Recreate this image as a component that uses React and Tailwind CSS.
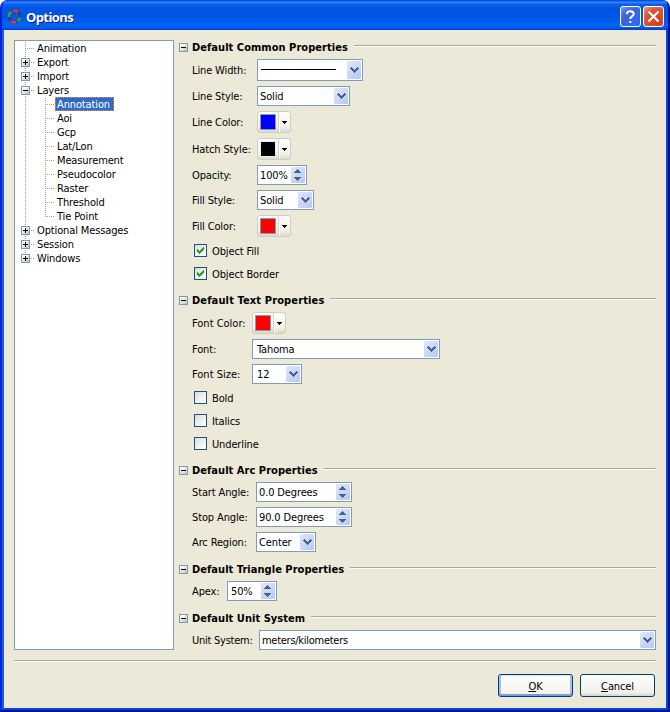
import React from "react";

function Expander({ open }) {
  return (
    <svg width="9" height="9" className="shrink-0" shapeRendering="crispEdges">
      <defs>
        <linearGradient id="box" x1="0" y1="0" x2="1" y2="1">
          <stop offset="0.2" stopColor="#fff" />
          <stop offset="1" stopColor="#c4bdac" />
        </linearGradient>
      </defs>
      <rect width="9" height="9" fill="#7b9ab8" />
      <rect x="1" y="1" width="7" height="7" fill="url(#box)" />
      <rect x="2" y="4" width="5" height="1" fill="#000" />
      {!open && <rect x="4" y="2" width="1" height="5" fill="#000" />}
    </svg>
  );
}

const tree = [
  { t: "Animation", k: "leaf" },
  { t: "Export", k: "plus" },
  { t: "Import", k: "plus" },
  { t: "Layers", k: "minus" },
  { t: "Annotation", k: "child", sel: true },
  { t: "Aoi", k: "child" },
  { t: "Gcp", k: "child" },
  { t: "Lat/Lon", k: "child" },
  { t: "Measurement", k: "child" },
  { t: "Pseudocolor", k: "child" },
  { t: "Raster", k: "child" },
  { t: "Threshold", k: "child" },
  { t: "Tie Point", k: "child", last: true },
  { t: "Optional Messages", k: "plus" },
  { t: "Session", k: "plus" },
  { t: "Windows", k: "plus", last: true },
];

function Branch({ k, last }) {
  const child = k === "child";
  const dots = { stroke: "#a39e8c", strokeDasharray: "1 1" };
  return (
    <svg width={child ? 40 : 20} height="14" className="shrink-0" shapeRendering="crispEdges">
      <line x1="10.5" y1="1" x2="10.5" y2={last && !child ? 8 : 14} {...dots} />
      {child && <line x1="30.5" y1="1" x2="30.5" y2={last ? 8 : 14} {...dots} />}
      <line x1={child ? 32 : 12} y1="7.5" x2={child ? 40 : 20} y2="7.5" {...dots} />
      {(k === "plus" || k === "minus") && (
        <g>
          <rect x="5" y="2" width="11" height="11" fill="#fff" />
          <svg x="6" y="3" width="9" height="9">
            <Expander open={k === "minus"} />
          </svg>
        </g>
      )}
    </svg>
  );
}

function Chevron() {
  return (
    <span className="flex h-full w-[14px] shrink-0 items-center rounded-[1px] bg-[linear-gradient(135deg,#dfe8fe,#b4c8f6)] pl-[3px]">
      <svg width="9" height="6" shapeRendering="crispEdges" fill="#4d6185">
        <path d="M0 1h1V0h1v1h1v1h1v1h1V2h1V1h1V0h1v1h1v1H8v1H7v1H6v1H5v1H4V5H3V4H2V3H1V2H0z" />
      </svg>
    </span>
  );
}

function Spin() {
  return (
    <span className="flex h-full w-[14px] shrink-0 flex-col items-start justify-between rounded-[1px] bg-[linear-gradient(135deg,#dfe8fe,#b4c8f6)] py-[2px] pl-[3px]">
      <svg width="7" height="4" shapeRendering="crispEdges" fill="#4d6185">
        <path d="M3 0h1v1h1v1h1v1h1v1H0V3h1V2h1V1h1z" />
      </svg>
      <svg width="7" height="4" shapeRendering="crispEdges" fill="#4d6185">
        <path d="M3 4h1V3h1V2h1V1h1V0H0v1h1v1h1v1h1z" />
      </svg>
    </span>
  );
}

function Field({ w, h = "h-5", pl = "pl-px", spin, children }) {
  return (
    <div className={`flex shrink-0 items-center border border-[#7f9db9] bg-white p-px ${w} ${h}`}>
      <span className={`flex-1 pt-[2px] ${pl}`}>{children}</span>
      {spin ? <Spin /> : <Chevron />}
    </div>
  );
}

function ColorButton({ color, edge = "border-[#7f9db9]" }) {
  return (
    <div className="flex h-[22px] w-[34px] shrink-0 items-center rounded-[3px] border border-[#d0cec2] bg-[linear-gradient(#fdfdfb,#f3f2ea_70%,#dedacb)] pl-[2px]">
      <span className={`h-4 w-4 shrink-0 border ${edge} ${color}`} />
      <span className="ml-[2px] h-full w-px bg-[#d6d3c6]" />
      <span className="h-full w-px bg-white" />
      <svg width="5" height="3" className="ml-[2px]" shapeRendering="crispEdges">
        <path d="M0 0h5v1H4v1H3v1H2V2H1V1H0z" />
      </svg>
    </div>
  );
}

function Check({ label, on, m }) {
  return (
    <div className={`ml-[15px] flex h-[13px] items-center ${m}`}>
      <span className="flex h-[13px] w-[13px] shrink-0 items-center justify-center border border-[#1c5180] bg-[linear-gradient(135deg,#dcdcd7,#ffffff)]">
        {on && (
          <svg width="7" height="7" shapeRendering="crispEdges" fill="#21a121">
            <path d="M0 2h1v1h1v1h1V3h1V2h1V1h1V0h1v3H6v1H5v1H4v1H3v1H2V6H1V5H0z" />
          </svg>
        )}
      </span>
      <span className="ml-[5px] pt-[2px]">{label}</span>
    </div>
  );
}

function Rule() {
  return <span className="h-[2px] flex-1 border-b border-white bg-[#aca899]" />;
}

function Header({ title, m, tr = "tracking-[0.04px]" }) {
  return (
    <div className={`flex h-[9px] items-start ${m}`}>
      <Expander open />
      <span className={`ml-1 mr-[6px] mt-[-2px] font-bold leading-[14px] ${tr}`}>{title}</span>
      <span className="mt-[2px] flex flex-1">
        <Rule />
      </span>
    </div>
  );
}

function Row({ label, lw, m, tr = "", children }) {
  return (
    <div className={`flex items-center pl-[13px] ${m}`}>
      <span className={`shrink-0 pt-[2px] ${lw} ${tr}`}>{label}</span>
      {children}
    </div>
  );
}

function TitleBar() {
  return (
    <div className="flex h-[30px] shrink-0 items-center bg-[linear-gradient(#0a4be0_3%,#3a8dfb_7%,#0a62ee_14%,#0055e5_26%,#0054e3_55%,#0062f5_80%,#0560f5_90%,#003dd0)] pl-[5px] pr-1 pt-[3px]">
      <svg width="15" height="15" viewBox="0 0 15 15" fill="none" strokeWidth="2.6">
        <circle cx="7.5" cy="7.5" r="5.5" stroke="#2a3f78" />
        <path d="M1.800 8A5.700 5.700 0 0 1 4.500 2.800M10.500 12.200A5.700 5.700 0 0 0 13 8.500" stroke="#3f9f45" />
        <path d="M6 2A5.700 5.700 0 0 1 10.800 2.900M4 12A5.700 5.700 0 0 0 9 13" stroke="#e0352b" />
      </svg>
      <span className="ml-[4px] flex-1 font-['Open_Sans',sans-serif] text-[13px] font-bold leading-4 tracking-[-0.6px] text-white [text-shadow:1px_1px_0_#0a1883]">
        Options
      </span>
      <span className="mr-[2px] flex h-[21px] w-[21px] items-center justify-center rounded-[3px] border border-white bg-[radial-gradient(circle_at_75%_80%,#2e6cf5,#3d63d4_60%,#7c9cec)]">
        <svg width="11" height="13" fill="none" stroke="#fff" strokeWidth="2">
          <path d="M2 4.200V3.500Q2.300 1.200 5.300 1.200T8.800 3.800Q8.800 5.200 7 6.300T5.300 9" />
          <path d="M4.300 12h2" />
        </svg>
      </span>
      <span className="flex h-[21px] w-[21px] items-center justify-center rounded-[3px] border border-white bg-[radial-gradient(circle_at_75%_80%,#d8401a,#d9532f_60%,#ee9a80)]">
        <svg width="13" height="13" fill="none" stroke="#fff" strokeWidth="2.200">
          <path d="M1.500 1.500l10 10M11.500 1.500l-10 10" />
        </svg>
      </span>
    </div>
  );
}

export default function App() {
  return (
    <div className="h-[712px] w-[670px] overflow-hidden bg-white font-['DejaVu_Sans_Condensed','DejaVu_Sans',sans-serif] text-[11px] leading-[14px] tracking-[-0.13px] text-black">
      <div className="flex h-full flex-col overflow-hidden rounded-t-[8px] border-x-2 border-b-2 border-b-[#001690] border-l-[#0a22d0] border-r-[#00138c] bg-[#0a4be0]">
        <TitleBar />
        <div className="flex flex-1 flex-col border-x-2 border-b-2 border-b-[#0045ea] border-l-[#1660e8] border-r-[#0045e0] bg-[#ece9d8] px-[10px] pt-[10px]">
          <div className="flex h-[610px]">
            <div className="w-[160px] shrink-0 border border-[#7f9db9] bg-white">
              {tree.map((n) => (
                <div key={n.t} className="flex h-[14px] whitespace-nowrap leading-4">
                  <Branch k={n.k} last={n.last} />
                  <span
                    className={
                      n.sel
                        ? "h-[14px] w-[59px] bg-[#316ac5] pl-[2px] text-white outline-1 outline-dotted outline-offset-[-1px] outline-[#e0953a]"
                        : "pl-[2px]"
                    }
                  >
                    {n.t}
                  </span>
                </div>
              ))}
            </div>
            <div className="ml-[5px] flex-1 whitespace-nowrap pt-[3px]">
              <Header title="Default Common Properties" />
              <Row label="Line Width:" lw="w-[65px]" m="mt-[7px]">
                <Field w="w-[106px]" h="h-[22px]">
                  <span className="-mt-[2px] ml-px block h-px w-[75px] bg-black" />
                </Field>
              </Row>
              <Row label="Line Style:" lw="w-[65px]" m="mt-[5px]">
                <Field w="w-[93px]">Solid</Field>
              </Row>
              <Row label="Line Color:" lw="w-[65px]" m="mt-[5px]">
                <ColorButton color="bg-[#0000ff]" />
              </Row>
              <Row label="Hatch Style:" lw="w-[65px]" m="mt-[5px]">
                <ColorButton color="bg-black" edge="border-[#e8eef4]" />
              </Row>
              <Row label="Opacity:" lw="w-[65px]" m="mt-[5px]">
                <Field w="w-[50px]" spin>100%</Field>
              </Row>
              <Row label="Fill Style:" lw="w-[65px]" m="mt-[5px]">
                <Field w="w-[57px]">Solid</Field>
              </Row>
              <Row label="Fill Color:" lw="w-[65px]" m="mt-[5px]">
                <ColorButton color="bg-[#ff0000]" />
              </Row>
              <Check label="Object Fill" on m="mt-[7px]" />
              <Check label="Object Border" on m="mt-[10px]" />

              <Header title="Default Text Properties" m="mt-4" tr="tracking-[0.13px]" />
              <Row label="Font Color:" lw="w-[60px]" m="mt-[7px]" tr="tracking-normal">
                <ColorButton color="bg-[#ff0000]" />
              </Row>
              <Row label="Font:" lw="w-[60px]" m="mt-[5px]">
                <Field w="w-[188px]" pl="pl-[3px]">Tahoma</Field>
              </Row>
              <Row label="Font Size:" lw="w-[60px]" m="mt-[5px]" tr="tracking-normal">
                <Field w="w-[50px]" pl="pl-[3px]">12</Field>
              </Row>
              <Check label="Bold" m="mt-[7px]" />
              <Check label="Italics" m="mt-[10px]" />
              <Check label="Underline" m="mt-[10px]" />

              <Header title="Default Arc Properties" m="mt-4" />
              <Row label="Start Angle:" lw="w-[64px]" m="mt-[7px]">
                <Field w="w-[96px]" spin>0.0 Degrees</Field>
              </Row>
              <Row label="Stop Angle:" lw="w-[64px]" m="mt-[5px]">
                <Field w="w-[96px]" spin>90.0 Degrees</Field>
              </Row>
              <Row label="Arc Region:" lw="w-[64px]" m="mt-[5px]">
                <Field w="w-[60px]">Center</Field>
              </Row>

              <Header title="Default Triangle Properties" m="mt-[13px]" />
              <Row label="Apex:" lw="w-[35px]" m="mt-[7px]">
                <Field w="w-[50px]" pl="pl-[2px]" spin>50%</Field>
              </Row>

              <Header title="Default Unit System" m="mt-[13px]" />
              <Row label="Unit System:" lw="w-[67px]" m="mt-[7px]" tr="tracking-[-0.25px]">
                <Field w="w-[397px]">
                  <span className="tracking-[-0.27px]">meters/kilometers</span>
                </Field>
              </Row>
            </div>
          </div>
          <div className="mt-[10px] flex">
            <Rule />
          </div>
          <div className="mt-3 flex justify-end gap-[7px] pr-px">
            <button className="h-[23px] w-[75px] rounded-[3px] border border-[#003c74] bg-[linear-gradient(#fdfdfb,#f3f2ea)] pt-[2px] shadow-[inset_0_1px_0_#cee7ff,inset_0_-2px_0_#7d9be8,inset_2px_0_0_#a5bdf3,inset_-2px_0_0_#a5bdf3]">
              <span className="underline">O</span>K
            </button>
            <button className="h-[23px] w-[75px] rounded-[3px] border border-[#003c74] bg-[linear-gradient(#ffffff,#f0f0ea_85%,#d8d0c4)] pt-[2px]">
              <span className="underline">C</span>ancel
            </button>
          </div>
        </div>
      </div>
    </div>
  );
}
